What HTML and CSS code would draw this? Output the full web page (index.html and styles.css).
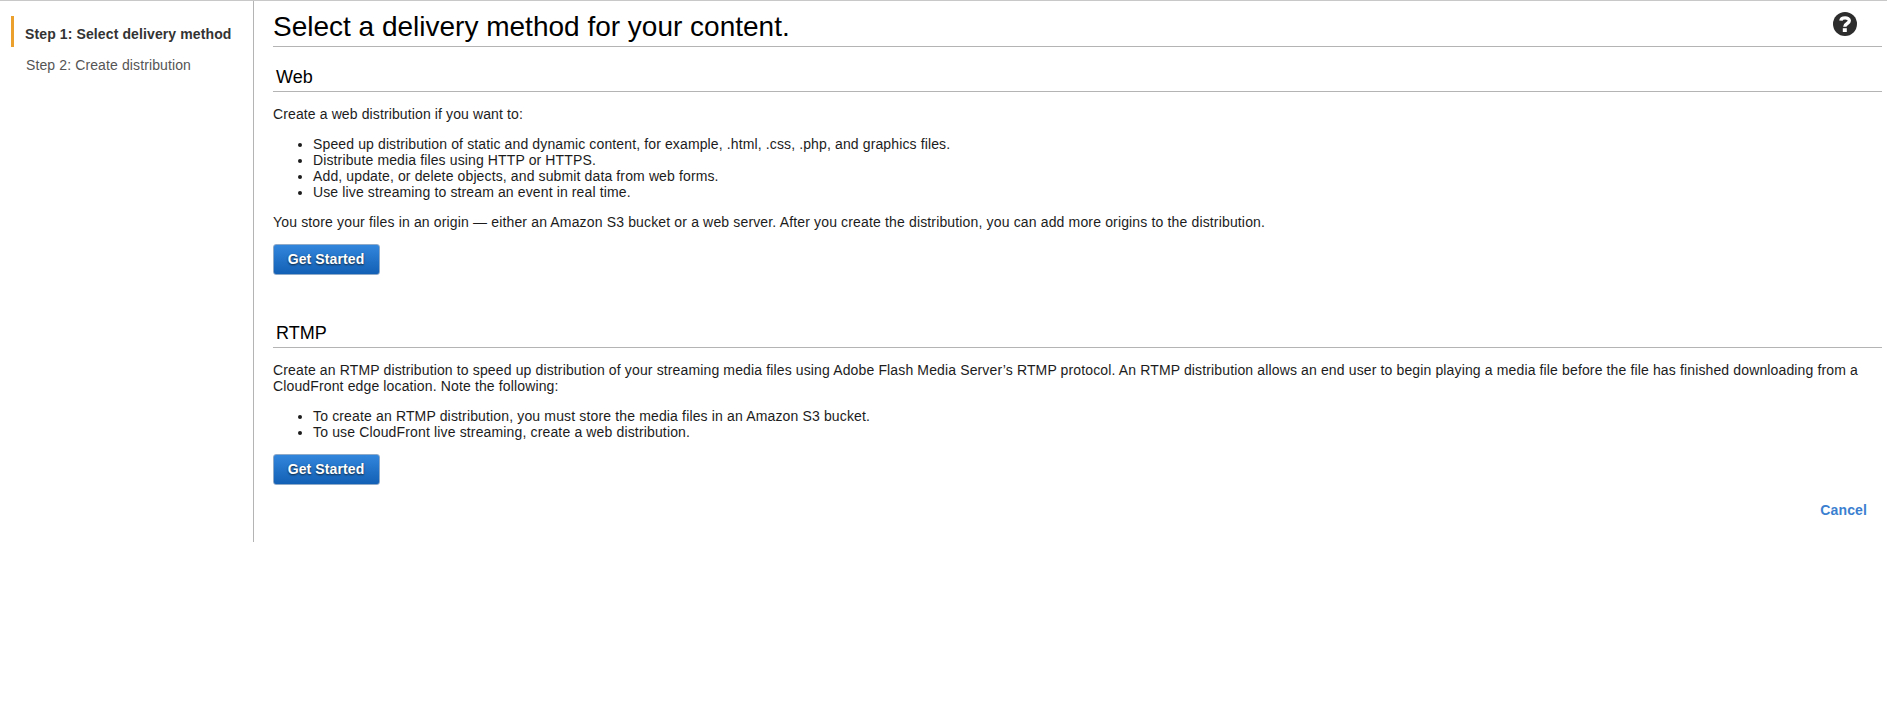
FILE: index.html
```html
<!DOCTYPE html>
<html lang="en">
<head>
<meta charset="utf-8">
<title>Select delivery method</title>
<link rel="stylesheet" href="styles.css">
</head>
<body>
<div class="wizard">
  <nav class="steps">
    <div class="step step-active">Step 1: Select delivery method</div>
    <div class="step">Step 2: Create distribution</div>
  </nav>
  <main class="content">
    <header class="page-header">
      <h1 class="page-title">Select a delivery method for your content.</h1>
      <svg class="help" viewBox="0 0 24 24" role="img" aria-label="Help">
        <circle cx="12" cy="12" r="12" fill="#2d2d2d"/>
        <path d="M7.900 8.700C8.200 5 16.300 4.800 16.300 8.800c0 2.900-4.500 2.500-4.500 6" fill="none" stroke="#fff" stroke-width="3.400"/>
        <rect x="9.800" y="16.200" width="4" height="3.800" fill="#fff"/>
      </svg>
    </header>
    <section class="method">
      <h2 class="method-title">Web</h2>
      <p class="text text-intro">Create a web distribution if you want to:</p>
      <ul class="list">
        <li>Speed up distribution of static and dynamic content, for example, .html, .css, .php, and graphics files.</li>
        <li>Distribute media files using HTTP or HTTPS.</li>
        <li>Add, update, or delete objects, and submit data from web forms.</li>
        <li>Use live streaming to stream an event in real time.</li>
      </ul>
      <p class="text text-origin">You store your files in an origin — either an Amazon S3 bucket or a web server. After you create the distribution, you can add more origins to the distribution.</p>
      <button class="button" type="button">Get Started</button>
    </section>
    <section class="method method-rtmp">
      <h2 class="method-title">RTMP</h2>
      <p class="text">Create an RTMP distribution to speed up distribution of your streaming media files using Adobe Flash Media Server’s RTMP protocol. An RTMP distribution allows an end user to begin playing a media file before the file has finished downloading from a<br>CloudFront edge location. Note the following:</p>
      <ul class="list list-rtmp">
        <li>To create an RTMP distribution, you must store the media files in an Amazon S3 bucket.</li>
        <li>To use CloudFront live streaming, create a web distribution.</li>
      </ul>
      <button class="button" type="button">Get Started</button>
    </section>
    <footer class="actions"><a class="cancel">Cancel</a></footer>
  </main>
</div>
</body>
</html>
```
FILE: styles.css
```css
* { box-sizing: border-box; }
body {
  margin: 0;
  background: #fff;
  color: #1c1c1c;
  font: 14px/16px "Liberation Sans", Arial, sans-serif;
}
.wizard {
  display: flex;
  height: 542px;
  border-top: 1px solid #c8c8c8;
}
.steps {
  width: 254px;
  padding: 15px 0 0 11px;
  border-right: 1px solid #b4b4b4;
  letter-spacing: 0.115px;
}
.step {
  height: 31px;
  padding: 10px 0 0 15px;
  color: #555;
  white-space: nowrap;
}
.step-active {
  padding-left: 11px;
  border-left: 3px solid #eb9f2d;
  color: #333;
  font-weight: bold;
}
.content {
  flex: 1;
  padding: 0 5px 0 19px;
}
.page-header {
  display: flex;
  justify-content: space-between;
  height: 46px;
  padding: 9px 25px 0 0;
  border-bottom: 1px solid #b4b4b4;
}
.page-title {
  margin: 0;
  color: #000;
  font-size: 28px;
  font-weight: normal;
  line-height: 34px;
}
.help {
  width: 24px;
  height: 24px;
  margin-top: 2px;
}
.method-title {
  height: 45px;
  margin: 0 0 14px;
  padding: 19px 0 0 3px;
  border-bottom: 1px solid #b4b4b4;
  color: #000;
  font-size: 18px;
  font-weight: normal;
  line-height: 22px;
}
.text {
  margin: 0 0 14px;
  letter-spacing: 0.136px;
  white-space: nowrap;
}
.text-intro { letter-spacing: 0.117px; }
.text-origin { letter-spacing: 0.153px; }
.list {
  margin: 0 0 14px;
  padding-left: 40px;
  letter-spacing: 0.126px;
}
.list-rtmp { letter-spacing: 0.15px; }
.button {
  display: block;
  width: 107px;
  height: 31px;
  padding: 0 1px 2px 0;
  border: 1px solid #8fa9c8;
  border-radius: 3px;
  background: linear-gradient(#3286dc, #1260b5);
  color: #fff;
  font: bold 14px/16px "Liberation Sans", Arial, sans-serif;
  letter-spacing: 0.1px;
  text-shadow: 0 1px 2px #123;
}
.method-rtmp { padding-top: 28px; }
.actions {
  display: flex;
  justify-content: flex-end;
  padding: 17px 15px 0 0;
}
.cancel {
  color: #3b7fd0;
  font-weight: bold;
  letter-spacing: 0.12px;
}
```
